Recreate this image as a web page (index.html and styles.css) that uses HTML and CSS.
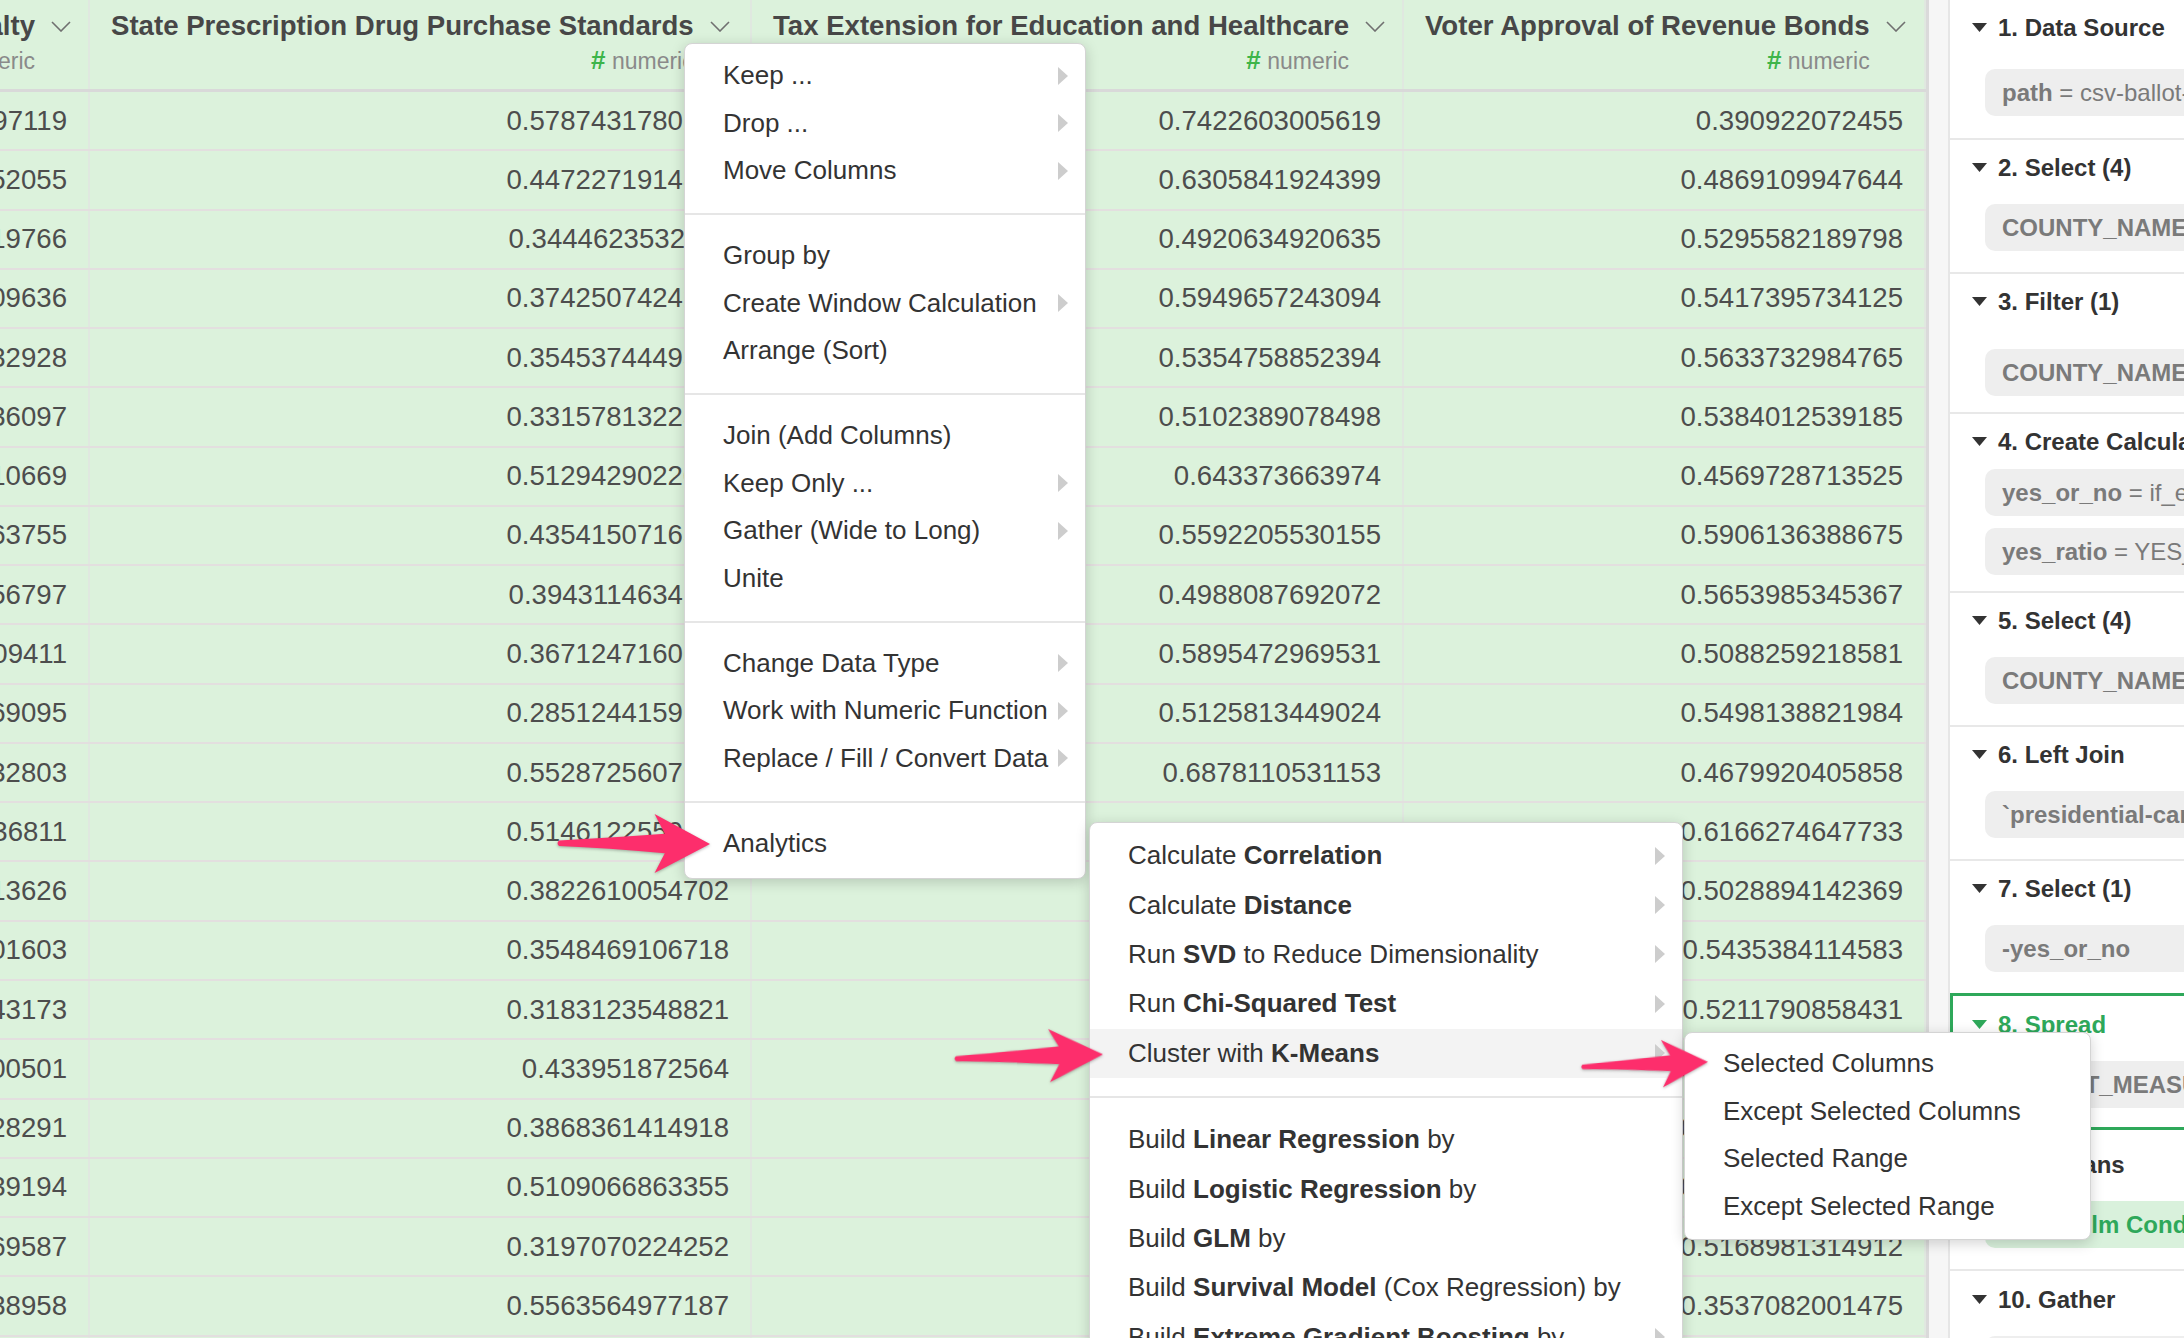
FILE: index.html
```html
<!DOCTYPE html>
<html lang="en">
<head>
    <meta charset="UTF-8">
    <title>Data Frame - Analytics Menu</title>
    <link rel="stylesheet" href="styles.css">
</head>
<body>
    <div class="app">
        <!-- Data grid -->
        <div class="grid">
            <div class="grid-row grid-head">
                <div class="th th-clip">
                    <div class="th-inner">
                        <span class="th-name">Repeal of Death Penalty</span>
                        <svg class="chev" viewBox="0 0 20 11"><polyline points="1,1 10,10 19,1"/></svg>
                        <span class="th-type"><b>#</b> numeric</span>
                    </div>
                </div>
                <div class="th">
                    <div class="th-inner">
                        <span class="th-name">State Prescription Drug Purchase Standards</span>
                        <svg class="chev" viewBox="0 0 20 11"><polyline points="1,1 10,10 19,1"/></svg>
                        <span class="th-type"><b>#</b> numeric</span>
                    </div>
                </div>
                <div class="th">
                    <div class="th-inner">
                        <span class="th-name">Tax Extension for Education and Healthcare</span>
                        <svg class="chev" viewBox="0 0 20 11"><polyline points="1,1 10,10 19,1"/></svg>
                        <span class="th-type"><b>#</b> numeric</span>
                    </div>
                </div>
                <div class="th">
                    <div class="th-inner">
                        <span class="th-name">Voter Approval of Revenue Bonds</span>
                        <svg class="chev" viewBox="0 0 20 11"><polyline points="1,1 10,10 19,1"/></svg>
                        <span class="th-type"><b>#</b> numeric</span>
                    </div>
                </div>
            </div>
            <div id="rows"></div>
        </div>

        <div class="gutter"></div>

        <!-- Steps panel -->
        <div class="steps">
            <div class="step step-source">
                <div class="step-title"><svg class="caret" viewBox="0 0 15 10"><polygon points="0,0 15,0 7.5,9"/></svg>1. Data Source</div>
                <div class="chip"><b>path</b> = csv-ballot-measures-2016.csv</div>
            </div>
            <div class="step">
                <div class="step-title"><svg class="caret" viewBox="0 0 15 10"><polygon points="0,0 15,0 7.5,9"/></svg>2. Select (4)</div>
                <div class="chip"><b>COUNTY_NAME, BALLOT_MEASURE_TITLE, YES_COUNT</b></div>
            </div>
            <div class="step step-filter">
                <div class="step-title"><svg class="caret" viewBox="0 0 15 10"><polygon points="0,0 15,0 7.5,9"/></svg>3. Filter (1)</div>
                <div class="chip"><b>COUNTY_NAME</b> != "State Totals"</div>
            </div>
            <div class="step step-calc">
                <div class="step-title"><svg class="caret" viewBox="0 0 15 10"><polygon points="0,0 15,0 7.5,9"/></svg>4. Create Calculation (2)</div>
                <div class="chip"><b>yes_or_no</b> = if_else(YES_COUNT &gt; NO_COUNT)</div>
                <div class="chip"><b>yes_ratio</b> = YES_COUNT / TOTAL</div>
            </div>
            <div class="step">
                <div class="step-title"><svg class="caret" viewBox="0 0 15 10"><polygon points="0,0 15,0 7.5,9"/></svg>5. Select (4)</div>
                <div class="chip"><b>COUNTY_NAME, BALLOT_MEASURE_TITLE, yes_ratio</b></div>
            </div>
            <div class="step">
                <div class="step-title"><svg class="caret" viewBox="0 0 15 10"><polygon points="0,0 15,0 7.5,9"/></svg>6. Left Join</div>
                <div class="chip"><b>`presidential-candidates-2016`</b></div>
            </div>
            <div class="step">
                <div class="step-title"><svg class="caret" viewBox="0 0 15 10"><polygon points="0,0 15,0 7.5,9"/></svg>7. Select (1)</div>
                <div class="chip"><b>-yes_or_no</b></div>
            </div>
            <div class="step step-current">
                <div class="step-title"><svg class="caret" viewBox="0 0 15 10"><polygon points="0,0 15,0 7.5,9"/></svg>8. Spread</div>
                <div class="chip"><b>BALLOT_MEASURE_TITLE, yes_ratio</b></div>
            </div>
            <div class="step step-kmeans">
                <div class="step-title"><svg class="caret" viewBox="0 0 15 10"><polygon points="0,0 15,0 7.5,9"/></svg>9. K-Means</div>
                <div class="chip chip-green"><b>Adult Film Condom Requirements</b></div>
            </div>
            <div class="step step-gather">
                <div class="step-title"><svg class="caret" viewBox="0 0 15 10"><polygon points="0,0 15,0 7.5,9"/></svg>10. Gather</div>
                <div class="chip"><b>key, value</b></div>
            </div>
        </div>
    </div>

    <!-- Column menu -->
    <div class="menu menu-main">
        <div class="menu-item has-sub">Keep ...</div>
        <div class="menu-item has-sub">Drop ...</div>
        <div class="menu-item has-sub">Move Columns</div>
        <div class="menu-sep"></div>
        <div class="menu-item">Group by</div>
        <div class="menu-item has-sub">Create Window Calculation</div>
        <div class="menu-item">Arrange (Sort)</div>
        <div class="menu-sep"></div>
        <div class="menu-item">Join (Add Columns)</div>
        <div class="menu-item has-sub">Keep Only ...</div>
        <div class="menu-item has-sub">Gather (Wide to Long)</div>
        <div class="menu-item">Unite</div>
        <div class="menu-sep"></div>
        <div class="menu-item has-sub">Change Data Type</div>
        <div class="menu-item has-sub">Work with Numeric Function</div>
        <div class="menu-item has-sub">Replace / Fill / Convert Data</div>
        <div class="menu-sep"></div>
        <div class="menu-item">Analytics</div>
    </div>

    <!-- Analytics submenu -->
    <div class="menu menu-analytics">
        <div class="menu-item has-sub"><span>Calculate <b>Correlation</b></span></div>
        <div class="menu-item has-sub"><span>Calculate <b>Distance</b></span></div>
        <div class="menu-item has-sub"><span>Run <b>SVD</b> to Reduce Dimensionality</span></div>
        <div class="menu-item has-sub"><span>Run <b>Chi-Squared Test</b></span></div>
        <div class="menu-item has-sub active"><span>Cluster with <b>K-Means</b></span></div>
        <div class="menu-sep"></div>
        <div class="menu-item"><span>Build <b>Linear Regression</b> by</span></div>
        <div class="menu-item"><span>Build <b>Logistic Regression</b> by</span></div>
        <div class="menu-item"><span>Build <b>GLM</b> by</span></div>
        <div class="menu-item"><span>Build <b>Survival Model</b> (Cox Regression) by</span></div>
        <div class="menu-item has-sub"><span>Build <b>Extreme Gradient Boosting</b> by</span></div>
        <div class="menu-item has-sub"><span>Build <b>Random Forest</b> by</span></div>
    </div>

    <!-- K-Means submenu -->
    <div class="menu menu-kmeans">
        <div class="menu-item">Selected Columns</div>
        <div class="menu-item">Except Selected Columns</div>
        <div class="menu-item">Selected Range</div>
        <div class="menu-item">Except Selected Range</div>
    </div>

    <!-- Annotation arrows -->
    <svg class="arrow arrow-1" viewBox="0 0 150 60" preserveAspectRatio="none"><path d="M3,27.5 Q50,25 106,21 L96,2 L150,31 L96,59 L106,40 Q50,35 3,33 Q0,30 3,27.5 Z"/></svg>
    <svg class="arrow arrow-2" viewBox="0 0 150 60" preserveAspectRatio="none"><path d="M3,27.5 Q50,25 106,21 L96,2 L150,31 L96,59 L106,40 Q50,35 3,33 Q0,30 3,27.5 Z"/></svg>
    <svg class="arrow arrow-3" viewBox="0 0 150 60" preserveAspectRatio="none"><path d="M3,27.5 Q50,25 106,21 L96,2 L150,31 L96,59 L106,40 Q50,35 3,33 Q0,30 3,27.5 Z"/></svg>

    <script>
        const colA = ['97119', '52055', '19766', '09636', '32928', '36097', '10669', '63755', '56797', '09411', '69095',
            '32803', '36811', '13626', '01603', '43173', '00501', '28291', '39194', '69587', '38958', '71540'];
        const colB = ['0.5787431780214', '0.4472271914893', '0.3444623532511', '0.3742507424268', '0.3545374449339',
            '0.3315781322314', '0.5129429022082', '0.4354150716503', '0.3943114634146', '0.3671247160636',
            '0.2851244159752', '0.5528725607955', '0.5146122559415', '0.3822610054702', '0.3548469106718',
            '0.3183123548821', '0.433951872564', '0.3868361414918', '0.5109066863355', '0.3197070224252',
            '0.5563564977187', '0.4412908833120'];
        const colC = ['0.7422603005619', '0.6305841924399', '0.4920634920635', '0.5949657243094', '0.5354758852394',
            '0.5102389078498', '0.643373663974', '0.5592205530155', '0.4988087692072', '0.5895472969531',
            '0.5125813449024', '0.6878110531153', '0.6012458133205', '0.5531840293371', '0.5790364120583',
            '0.5482917760114', '0.6620193847551', '0.5139087424662', '0.5927714306158', '0.5388462019873',
            '0.6154023977310', '0.5703318846129'];
        const colD = ['0.390922072455', '0.4869109947644', '0.5295582189798', '0.5417395734125', '0.5633732984765',
            '0.5384012539185', '0.4569728713525', '0.5906136388675', '0.5653985345367', '0.5088259218581',
            '0.5498138821984', '0.4679920405858', '0.6166274647733', '0.5028894142369', '0.5435384114583',
            '0.5211790858431', '0.4983120775342', '0.5312947710064', '0.5077412309856', '0.5168981314912',
            '0.3537082001475', '0.4821137690512'];

        const rows = document.getElementById('rows');
        colA.forEach((tail, i) => {
            const row = document.createElement('div');
            row.className = 'grid-row';
            [`0.52812${tail}`, colB[i], colC[i], colD[i]].forEach(value => {
                const cell = document.createElement('div');
                cell.className = 'td';
                cell.textContent = value;
                row.appendChild(cell);
            });
            rows.appendChild(row);
        });
    </script>
</body>
</html>
```

FILE: styles.css
```css
body {
    margin: 0;
    width: 2184px;
    height: 1338px;
    overflow: hidden;
    position: relative;
    background: #ffffff;
    font-family: "Liberation Sans", Arial, sans-serif;
}
.app {
    display: flex;
    height: 1338px;
}

/* grid */
.grid {
    width: 1926px;
    flex: none;
    overflow: hidden;
    background: #dcf2dc;
}
.grid-row {
    display: grid;
    grid-template-columns: 90px 662px 652px 522px;
    height: 59.27px;
    box-sizing: border-box;
    border-bottom: 2px solid #e3dfdf;
}
.grid-head {
    height: 92px;
    border-bottom: 3px solid #d9d9d9;
}
.th {
    display: flex;
    justify-content: flex-start;
    padding: 9px 0 0 21px;
    overflow: hidden;
    border-right: 2px solid #e0e8e0;
}
.th-clip {
    justify-content: flex-end;
    padding: 9px 17px 0 0;
}
.th-inner {
    display: grid;
    grid-template-columns: auto 20px;
    column-gap: 16px;
    align-items: center;
    align-content: start;
}
.th-name {
    font-weight: bold;
    font-size: 27.6px;
    line-height: 34px;
    color: #474747;
    white-space: nowrap;
}
.chev {
    width: 20px;
    height: 11px;
    fill: none;
    stroke: #707070;
    stroke-width: 1.6;
}
.th-type {
    grid-column: 1;
    justify-self: end;
    margin-top: 2px;
    font-size: 23px;
    line-height: 30px;
    color: #8a8a8a;
    white-space: nowrap;
}
.th-type b {
    font-size: 26px;
    color: #3db54a;
}
.td {
    display: flex;
    justify-content: flex-end;
    align-items: center;
    padding-right: 21px;
    overflow: hidden;
    border-right: 2px solid #e0e8e0;
    font-size: 27.6px;
    color: #4d4d4d;
    white-space: nowrap;
}

.gutter {
    width: 24px;
    flex: none;
    box-sizing: border-box;
    background: #f6f6f6;
    border-left: 3px solid #dadada;
    border-right: 2px solid #e6e6e6;
}

/* steps panel */
.steps {
    flex: 1;
    overflow: hidden;
    background: #ffffff;
}
.step {
    padding: 11px 0 21px 22px;
    border-bottom: 2px solid #e8e8e8;
}
.step-title {
    display: flex;
    align-items: center;
    height: 34px;
    font-weight: bold;
    font-size: 24px;
    color: #333333;
    white-space: nowrap;
}
.caret {
    width: 15px;
    height: 10px;
    margin-right: 11px;
    fill: #333333;
    flex: none;
}
.chip {
    margin: 19px 0 0 13px;
    width: 480px;
    height: 47px;
    line-height: 47px;
    padding-left: 17px;
    background: #eeeeee;
    border-radius: 10px;
    font-size: 24px;
    color: #7a7a7a;
    white-space: nowrap;
    overflow: hidden;
}
.step-source {
    padding-bottom: 22px;
}
.step-source .chip {
    margin-top: 24px;
}
.step-filter {
    padding-bottom: 16px;
}
.step-filter .chip {
    margin-top: 30px;
}
.step-calc {
    padding-bottom: 16px;
}
.step-calc .chip {
    margin-top: 10px;
}
.step-calc .chip + .chip {
    margin-top: 12px;
}
.step-current {
    border: 3px solid #2ea85a;
    border-right: none;
    padding: 12px 0 19px 19px;
    margin-top: -2px;
}
.step-current .step-title {
    color: #2ea85a;
}
.step-current .caret {
    fill: #2ea85a;
}
.step-current .chip {
    margin-top: 19px;
}
.step-kmeans {
    padding: 18px 0 21px 22px;
}
.chip-green {
    background: #d9f1dc;
    color: #2ea85a;
}
.step-gather {
    padding-top: 12px;
    border-bottom: none;
}

/* menus */
.menu {
    position: absolute;
    box-sizing: border-box;
    background: #ffffff;
    border: 1px solid #d4d4d4;
    border-radius: 8px;
    box-shadow: 0 3px 14px rgba(0, 0, 0, 0.18);
    font-size: 26px;
    color: #333333;
}
.menu-item {
    display: flex;
    align-items: center;
    justify-content: space-between;
    height: 47.5px;
    padding: 0 17px 0 38px;
    white-space: nowrap;
}
.menu-item.has-sub::after {
    content: "";
    flex: none;
    margin-left: 8px;
    border-left: 10px solid #cdcdcd;
    border-top: 9px solid transparent;
    border-bottom: 9px solid transparent;
}
.menu-item.active {
    background: #f3f3f3;
}
.menu-sep {
    height: 2px;
    background: #e6e6e6;
    margin: 18.5px 0 17px;
}
.menu-main {
    left: 684px;
    top: 43px;
    width: 402px;
    padding: 8px 0 11px;
}
.menu-analytics {
    left: 1089px;
    top: 822px;
    width: 594px;
    padding: 8px 0;
}
.menu-analytics .menu-item {
    height: 49.4px;
}
.menu-analytics .menu-sep {
    margin: 18px 0 17px;
}
.menu-kmeans {
    left: 1684px;
    top: 1032px;
    width: 407px;
    padding: 7px 0 9px;
}

/* annotation arrows */
.arrow {
    position: absolute;
    fill: #fd2e6c;
    filter: drop-shadow(0 1px 1.5px rgba(0, 0, 0, 0.3));
}
.arrow-1 {
    left: 556px;
    top: 812px;
    width: 154px;
    height: 62px;
}
.arrow-2 {
    left: 953px;
    top: 1028px;
    width: 150px;
    height: 56px;
    transform: rotate(-2deg);
}
.arrow-3 {
    left: 1580px;
    top: 1039px;
    width: 128px;
    height: 50px;
    transform: rotate(-2.5deg);
}
```
